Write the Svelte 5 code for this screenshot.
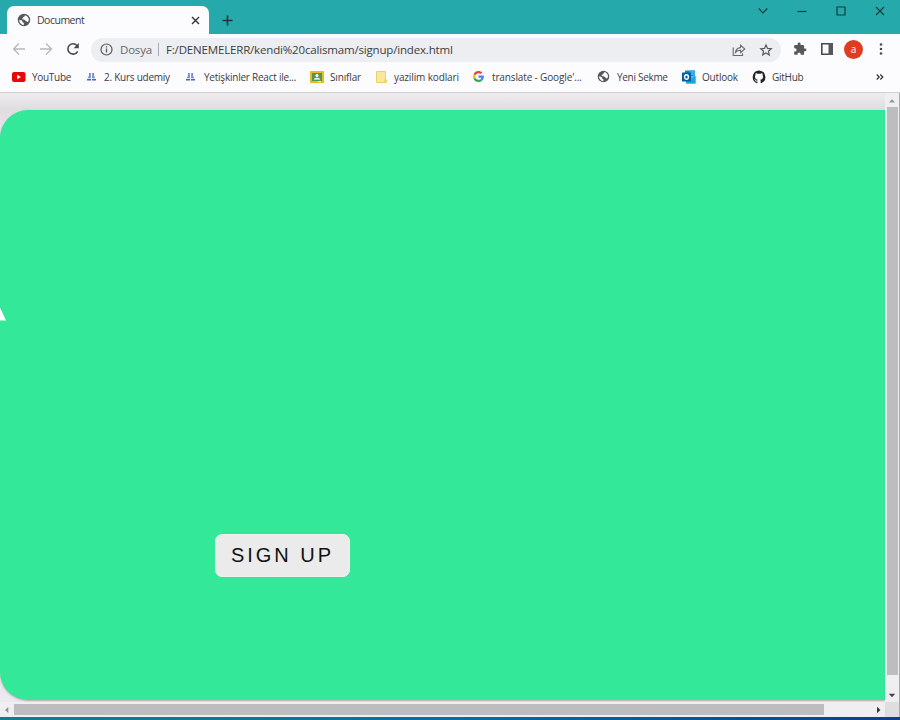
<script>
  const bookmarks = [
    { icon: 'youtube', label: 'YouTube', width: 75, gap: 20, spacing: -0.3 },
    { icon: 'udemy', label: '2. Kurs udemiy', width: 99, gap: 17, spacing: -0.25 },
    { icon: 'udemy', label: 'Yetişkinler React ile...', width: 124, gap: 18, spacing: -0.23 },
    { icon: 'classroom', label: 'Sınıflar', width: 66, gap: 20, spacing: -0.15 },
    { icon: 'note', label: 'yazilim kodlari', width: 97, gap: 18, spacing: -0.13 },
    { icon: 'google', label: "translate - Google'...", width: 124, gap: 19, spacing: -0.14 },
    { icon: 'globe', label: 'Yeni Sekme', width: 85, gap: 20, spacing: -0.3 },
    { icon: 'outlook', label: 'Outlook', width: 70, gap: 20, spacing: -0.2 },
    { icon: 'github', label: 'GitHub', width: 60, gap: 20, spacing: -0.25 }
  ];
</script>

{#snippet globe(size)}
  <svg width={size} height={size} viewBox="0 0 14 14"><circle cx="7" cy="7" r="6.200" fill="#55585c"/><path d="M2.200 6.500c.8 1 2.100.5 2.900 1.200.6.600.1 1.300.8 1.700.6.300 1.100.2 1 1v1.800A5.200 5.200 0 0 1 2.200 6.500z" fill="#fcfbfe"/><path d="M7.600 2.200c.5.600.2 1.400-.6 1.500-.8.200-1 .6-1 1.200 0 .7-1.100.5-1 1.200.1.600 1.600.4 2.400.6.800.2.700 1.200 1.500 1.300.8.100 1 .8 1.800 1.100.8-.7 1.300-1.700 1.100-3-.4-2.100-2-3.700-4.200-3.900z" fill="#fcfbfe"/></svg>
{/snippet}

{#snippet icon(name)}
  {#if name === 'youtube'}
    <svg width="14" height="14" viewBox="0 0 14 14"><rect y="2" width="13.500" height="10" rx="2" fill="#e80808"/><path d="M5.200 4.800v4.400L9 7z" fill="#fff"/></svg>
  {:else if name === 'udemy'}
    <svg width="9" height="12" viewBox="0 0 9 12"><path d="M2.900 2v5M6.100 2v5" stroke="#5275bd" stroke-width="1.500"/><path d="M2.600 3.500.7 7.200h3.500zM6.400 3.500 4.800 7.200h3.500z" fill="#7895d4"/><path d="M0 8.700h4M5 8.700h4" stroke="#4a65aa" stroke-width="1.400"/></svg>
  {:else if name === 'classroom'}
    <svg width="14" height="14" viewBox="0 0 14 14"><rect y="1" width="14" height="12" rx=".7" fill="#e9b62c"/><rect x="2" y="3" width="10" height="8" fill="#4b9a50"/><circle cx="7" cy="5.600" r="1.500" fill="#fff"/><path d="M3.800 9.800c.3-3 6.100-3 6.400 0z" fill="#d9eedb"/><path d="M8 11h3v1H8z" fill="#fff3c4"/></svg>
  {:else if name === 'note'}
    <svg width="11" height="14" viewBox="0 0 11 14"><path d="M.5 1.500h9v8.800h1v2.200H.5z" fill="#fbe799" stroke="#ead06f"/><path d="M8 9.500h2.500v3H8z" fill="#edd276"/></svg>
  {:else if name === 'google'}
    <svg width="11" height="11" viewBox="0 0 48 48"><path fill="#ea4335" d="M24 9.500c3.500 0 6.700 1.200 9.200 3.600l6.900-6.900C35.900 2.400 30.500 0 24 0 14.600 0 6.500 5.400 2.600 13.200l8 6.200C12.400 13.700 17.700 9.500 24 9.500z"/><path fill="#4285f4" d="M47 24.600c0-1.600-.2-3.100-.4-4.600H24v9h12.900c-.6 3-2.200 5.500-4.700 7.200l7.700 6C44.400 38 47 32 47 24.600z"/><path fill="#fbbc05" d="M10.500 28.600A14.500 14.500 0 0 1 9.800 24c0-1.600.3-3.100.8-4.600l-8-6.200A24 24 0 0 0 0 24c0 3.900.9 7.500 2.600 10.800z"/><path fill="#34a853" d="M24 48c6.500 0 11.900-2.100 15.900-5.800l-7.700-6c-2.200 1.500-4.900 2.300-8.200 2.300-6.300 0-11.600-4.200-13.500-9.900l-8 6.200C6.500 42.600 14.600 48 24 48z"/></svg>
  {:else if name === 'globe'}
    {@render globe(13)}
  {:else if name === 'outlook'}
    <svg width="14" height="14" viewBox="0 0 14 14"><rect x="3" y=".5" width="10" height="8" fill="#1687cf"/><path d="M8 .5h5v5H8z" fill="#31aee7"/><path d="M4 6h9.500v7.500H4z" fill="#42bde9"/><path d="m4 12 9.500-6v7.500H4z" fill="#1ca5dc"/><rect y="2.500" width="9" height="9" rx=".6" fill="#075f9f"/><ellipse cx="4.500" cy="7" rx="1.900" ry="2.200" fill="none" stroke="#fff" stroke-width="1.400"/></svg>
  {:else}
    <svg width="14" height="14" viewBox="0 0 16 16"><path fill="#202328" d="M8 .5A7.500 7.500 0 0 0 5.700 15c.4.100.5-.2.500-.4v-1.400c-2 .4-2.500-.9-2.500-.9-.3-.8-.8-1.100-.8-1.100-.7-.5 0-.5 0-.5.700 0 1.100.8 1.100.8.700 1.100 1.800.8 2.200.6 0-.5.300-.8.500-1-1.600-.2-3.300-.8-3.300-3.600 0-.8.300-1.400.7-1.900-.1-.2-.3-.9.100-1.900 0 0 .6-.2 2 .7a7 7 0 0 1 3.700 0c1.400-.9 2-.7 2-.7.400 1 .1 1.700.1 1.900.4.500.7 1.100.7 1.900 0 2.800-1.700 3.400-3.300 3.600.3.200.5.700.5 1.400v2.100c0 .2.100.5.500.4A7.500 7.500 0 0 0 8 .5z"/></svg>
  {/if}
{/snippet}

<div class="window">
  <header class="titlebar">
    <div class="tab">
      <span class="favicon">{@render globe(14)}</span>
      <span class="tab-title">Document</span>
      <svg width="9" height="9" viewBox="0 0 9 9"><path d="m1 1 7 7M8 1 1 8" stroke="#333" stroke-width="1.400"/></svg>
    </div>
    <svg class="plus" width="11" height="11" viewBox="0 0 11 11"><path d="M5.500.5v10M.5 5.500h10" stroke="#1c3438" stroke-width="1.600"/></svg>
    <div class="controls">
      <svg width="10" height="10" viewBox="0 0 10 10"><path d="m.7 2.500 4.300 4.500 4.300-4.500" /></svg>
      <svg width="10" height="10" viewBox="0 0 10 10"><path d="M.5 5.500h9" /></svg>
      <svg width="10" height="10" viewBox="0 0 10 10"><path d="M1 1h8v8H1z" /></svg>
      <svg width="10" height="10" viewBox="0 0 10 10"><path d="m1 1 8 8M9 1 1 9" /></svg>
    </div>
  </header>

  <nav class="toolbar">
    <div class="history">
      <svg width="14" height="14" viewBox="0 0 14 14"><path d="M13 7H1.500M7 1.500 1.500 7 7 12.500" stroke="#b8b8ba" stroke-width="1.300" fill="none"/></svg>
      <svg width="14" height="14" viewBox="0 0 14 14"><path d="M1 7h11.500M7 1.500 12.500 7 7 12.500" stroke="#b8b8ba" stroke-width="1.300" fill="none"/></svg>
      <svg width="14" height="14" viewBox="0 0 14 14"><path d="M11.700 9.300A5.200 5.200 0 1 1 11 3.500L12 4.700" stroke="#484b4f" stroke-width="1.600" fill="none"/><path d="M12.800 1v5.200H7.600z" fill="#484b4f"/></svg>
    </div>
    <div class="address">
      <svg width="13" height="13" viewBox="0 0 13 13"><circle cx="6.500" cy="6.500" r="5.500" fill="none" stroke="#55585c" stroke-width="1.200"/><path d="M6.500 5.600v4M6.500 3.200v1.300" stroke="#55585c" stroke-width="1.300"/></svg>
      <span class="scheme">Dosya</span>
      <span class="divider"></span>
      <span class="url">F:/DENEMELERR/kendi%20calismam/signup/index.html</span>
      <svg class="share" width="14" height="14" viewBox="0 0 14 14"><path d="M1.200 4.500v8h9.300v-2.300M3.500 9.300C4 6 6 4.700 8.600 4.600V2.200L12.800 6 8.600 9.500V7.300C6.500 7.200 5 7.700 3.500 9.300z" fill="none" stroke="#66696d" stroke-width="1.100"/></svg>
      <svg width="14" height="14" viewBox="0 0 24 24"><path d="m12 3.300 2.600 6 6.500.5-4.900 4.300 1.500 6.400-5.700-3.400-5.700 3.400 1.500-6.400-4.900-4.300 6.500-.5z" fill="none" stroke="#55585c" stroke-width="2"/></svg>
    </div>
    <div class="actions">
      <svg width="14" height="14" viewBox="0 0 24 24"><path fill="#55585c" d="M20.500 11H19V7a2 2 0 0 0-2-2h-4V3.500a2.500 2.500 0 0 0-5 0V5H4a2 2 0 0 0-2 2v3.800h1.500a2.700 2.700 0 0 1 0 5.400H2V20c0 1.100.9 2 2 2h3.800v-1.500a2.700 2.700 0 0 1 5.400 0V22H17a2 2 0 0 0 2-2v-4h1.500a2.500 2.500 0 0 0 0-5z"/></svg>
      <svg width="12" height="12" viewBox="0 0 12 12"><path d="M.8.8h10.400v10.400H.8z" fill="none" stroke="#484b4f" stroke-width="1.600"/><path d="M7.500 0H12v12H7.500z" fill="#55585c"/></svg>
      <span class="avatar">a</span>
      <svg class="menu" width="4" height="14" viewBox="0 0 4 14"><g fill="#484b4f"><circle cx="2" cy="2.500" r="1.300"/><circle cx="2" cy="7" r="1.300"/><circle cx="2" cy="11.500" r="1.300"/></g></svg>
    </div>
  </nav>

  <div class="bookmarks">
    {#each bookmarks as item}
      <div class="bookmark" style="width: {item.width}px">
        <span class="slot" style="width: {item.gap}px">{@render icon(item.icon)}</span>
        <span class="label" style="letter-spacing: {item.spacing}px">{item.label}</span>
      </div>
    {/each}
    <svg class="more" width="8" height="8" viewBox="0 0 8 8"><path d="m.7 1.500 2.500 2.500-2.500 2.500M4.300 1.500 6.800 4 4.300 6.500" fill="none" stroke="#333" stroke-width="1.200"/></svg>
  </div>

  <div class="viewport">
    <main class="page">
      <section class="card">
        <svg class="wedge" width="7" height="16" viewBox="0 0 7 16"><path d="M0 1.500 6 14.500H0z" fill="#fff"/></svg>
        <button>SIGN UP</button>
      </section>
    </main>
    <div class="vscroll">
      <svg width="8" height="5" viewBox="0 0 8 5"><path d="m1 4.500 3-3.500 3 3.500z" fill="#98989a"/></svg>
      <div class="vthumb"></div>
      <svg width="8" height="5" viewBox="0 0 8 5"><path d="m.8.700 3.200 3.500L7.200.7z" fill="#434347"/></svg>
    </div>
  </div>
  <div class="hscroll">
    <svg width="5" height="8" viewBox="0 0 5 8"><path d="M4.300 1 1 4l3.300 3z" fill="#929295"/></svg>
    <div class="hthumb"></div>
    <svg class="right" width="5" height="8" viewBox="0 0 5 8"><path d="m1 .7 3.400 3.300L1 7.300z" fill="#37373b"/></svg>
    <div class="corner"></div>
  </div>
  <div class="desktop"></div>
</div>

<style>
  :global(body) { margin: 0; }
  * { box-sizing: border-box; }
  svg { display: block; flex: none; }
  .window { width: 900px; height: 720px; overflow: hidden; display: flex; flex-direction: column; background: #fcfbfe; font-family: "Open Sans", "Noto Sans", sans-serif; color: #3b3d42; }
  .titlebar { height: 34px; flex: none; background: #26a9ab; display: flex; align-items: flex-start; padding-left: 7px; }
  .tab { width: 202px; height: 28px; margin-top: 6px; display: flex; align-items: center; padding: 0 9px 0 10px; border-radius: 7px 7px 0 0; background: #fcfbfe; }
  .favicon { width: 20px; }
  .tab-title { flex: 1; font-size: 10.5px; letter-spacing: -.5px; }
  .plus { margin: 15px 0 0 13px; }
  .controls { display: flex; gap: 29px; margin: 6px 15px 0 auto; }
  .controls path { fill: none; stroke: #173c40; stroke-width: 1.2; }
  .toolbar { height: 30px; flex: none; display: flex; align-items: center; padding-left: 12px; }
  .history { display: flex; gap: 13px; width: 79px; }
  .address { width: 690px; height: 24px; margin-top: 1px; border-radius: 12px; background: #edeef1; display: flex; align-items: center; padding: 0 8px 0 9px; font-size: 12px; }
  .scheme { width: 38px; margin-left: 7px; color: #65686d; font-size: 11.5px; letter-spacing: -.2px; }
  .divider { width: 1px; height: 13px; background: #aaabb0; margin-right: 7px; }
  .url { white-space: nowrap; font-size: 11.5px; letter-spacing: -.17px; }
  .share { margin: 0 13px 0 auto; }
  .actions { display: flex; align-items: center; margin-left: 12px; gap: 14px; }
  .avatar { width: 19px; height: 19px; margin: 0 0 0 -3px; border-radius: 50%; background: #df3c20; color: white; font-size: 10px; line-height: 18px; text-align: center; }
  .menu { margin-left: 2px; }
  .bookmarks { height: 29px; flex: none; display: flex; align-items: center; padding: 0 16px 3px 12px; border-bottom: 1px solid #d2d1d5; }
  .bookmark { flex: none; display: flex; align-items: center; }
  .slot { flex: none; }
  .label { white-space: nowrap; font-size: 10px; line-height: 16px; }
  .more { margin-left: auto; }
  .viewport { display: flex; height: 609px; flex: none; }
  .page { width: 885px; overflow: hidden; padding-top: 17px; background: linear-gradient(#edebee, #dfdde0 17px, #ebe9ed 45px); }
  .card { height: 590px; border-radius: 28px 0 0 28px; background: #34e89a; box-shadow: 0 1px 2px #baa9ad; display: flex; flex-direction: column; align-items: flex-start; }
  .wedge { margin-top: 196px; }
  button { width: 135px; height: 43px; margin: 212px 0 0 215px; padding: 0; border: 1px solid #f0f0f0; border-radius: 7px; background: #ebebeb; color: #111; font: 20px "Liberation Sans", Arial, sans-serif; letter-spacing: 3px; white-space: nowrap; }
  .vscroll { width: 15px; background: #efeff2; border-right: 1px solid #a9aaad; display: flex; flex-direction: column; align-items: center; padding: 5px 0 4px; }
  .vthumb { width: 11px; height: 568px; margin: 4px 0 18px; background: #bdbdbf; }
  .hscroll { height: 15px; flex: none; background: #efeff2; display: flex; align-items: center; padding-left: 4px; border-right: 1px solid #a9aaad; }
  .hthumb { width: 810px; height: 11px; margin-left: 5px; background: #bdbdbf; }
  .right { margin-left: auto; margin-right: 4px; }
  .corner { width: 14px; height: 15px; background: #dededf; }
  .desktop { height: 3px; background: linear-gradient(90deg, #16799b, #086e9f 50%, #07428c); }
</style>
